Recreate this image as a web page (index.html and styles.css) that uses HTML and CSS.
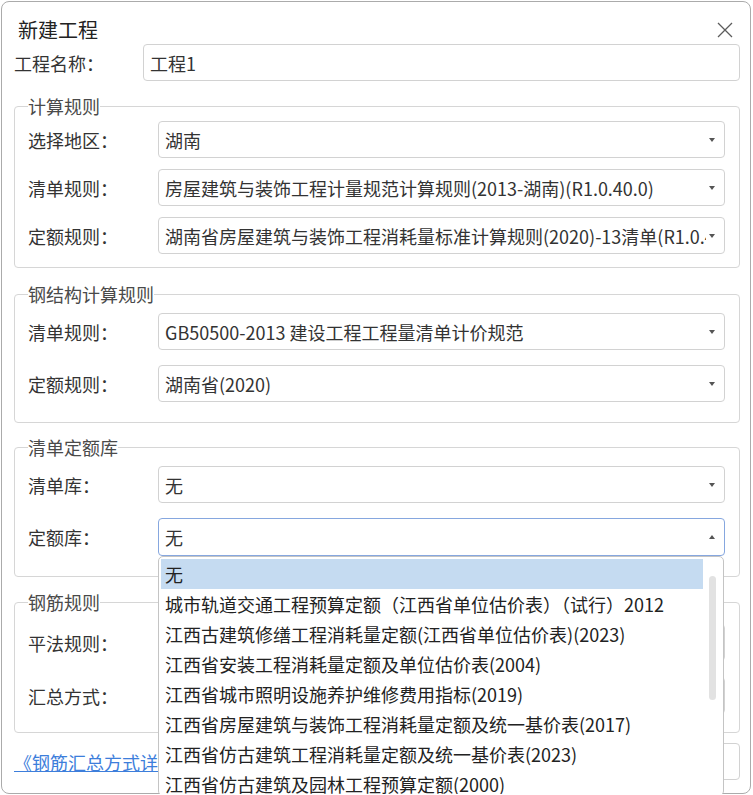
FILE: index.html
```html
<!DOCTYPE html>
<html lang="zh-CN">

<head>
    <meta charset="UTF-8">
    <title>新建工程</title>
    <link rel="stylesheet" href="styles.css">
</head>

<body>
    <div class="dialog">
        <div class="title-bar">
            <span class="title">新建工程</span>
            <span class="close">
                <svg width="16" height="16" viewBox="0 0 16 16"><path d="M1 1L15 15M15 1L1 15" stroke="#5c5c5c" stroke-width="1.3" fill="none"/></svg>
            </span>
        </div>

        <div class="row name-row">
            <label>工程名称：</label>
            <div class="field">工程1</div>
        </div>

        <!-- 计算规则 -->
        <fieldset class="group g-calc">
            <legend>计算规则</legend>
            <div class="rows">
                <div class="row">
                    <label>选择地区：</label>
                    <div class="select"><span class="value">湖南</span><i class="arrow"></i></div>
                </div>
                <div class="row">
                    <label>清单规则：</label>
                    <div class="select"><span class="value">房屋建筑与装饰工程计量规范计算规则(2013-湖南)(R1.0.40.0)</span><i class="arrow"></i></div>
                </div>
                <div class="row">
                    <label>定额规则：</label>
                    <div class="select"><span class="value">湖南省房屋建筑与装饰工程消耗量标准计算规则(2020)-13清单(R1.0.40.0)</span><i class="arrow"></i></div>
                </div>
            </div>
        </fieldset>

        <!-- 钢结构计算规则 -->
        <fieldset class="group g-steel">
            <legend>钢结构计算规则</legend>
            <div class="rows">
                <div class="row">
                    <label>清单规则：</label>
                    <div class="select"><span class="value">GB50500-2013 建设工程工程量清单计价规范</span><i class="arrow"></i></div>
                </div>
                <div class="row">
                    <label>定额规则：</label>
                    <div class="select"><span class="value">湖南省(2020)</span><i class="arrow"></i></div>
                </div>
            </div>
        </fieldset>

        <!-- 清单定额库 -->
        <fieldset class="group g-lib">
            <legend>清单定额库</legend>
            <div class="rows">
                <div class="row">
                    <label>清单库：</label>
                    <div class="select"><span class="value">无</span><i class="arrow"></i></div>
                </div>
                <div class="row">
                    <label>定额库：</label>
                    <div class="select open">
                        <span class="value">无</span><i class="arrow up"></i>
                        <div class="popup">
                            <ul class="options">
                                <li class="selected">无</li>
                                <li>城市轨道交通工程预算定额（江西省单位估价表）（试行）2012</li>
                                <li>江西古建筑修缮工程消耗量定额(江西省单位估价表)(2023)</li>
                                <li>江西省安装工程消耗量定额及单位估价表(2004)</li>
                                <li>江西省城市照明设施养护维修费用指标(2019)</li>
                                <li>江西省房屋建筑与装饰工程消耗量定额及统一基价表(2017)</li>
                                <li>江西省仿古建筑工程消耗量定额及统一基价表(2023)</li>
                                <li>江西省仿古建筑及园林工程预算定额(2000)</li>
                            </ul>
                            <div class="scroll-thumb"></div>
                        </div>
                    </div>
                </div>
            </div>
        </fieldset>

        <!-- 钢筋规则 (inputs sit under the open list) -->
        <fieldset class="group g-rebar">
            <legend>钢筋规则</legend>
            <div class="rows">
                <div class="row">
                    <label>平法规则：</label>
                    <div class="select"><span class="value"></span><i class="arrow"></i></div>
                </div>
                <div class="row">
                    <label>汇总方式：</label>
                    <div class="select"><span class="value"></span><i class="arrow"></i></div>
                </div>
            </div>
        </fieldset>

        <div class="footer">
            <a href="#">《钢筋汇总方式详</a>
            <button type="button"></button>
        </div>
    </div>
</body>

</html>
```

FILE: styles.css
```css
html,
body {
    margin: 0;
    padding: 0;
    overflow: hidden;
    background: #fff;
}

body {
    font-family: "Noto Sans CJK SC", "Noto Sans", sans-serif;
    font-size: 18px;
    color: #333;
}

.dialog {
    position: relative;
    box-sizing: border-box;
    width: 750px;
    height: 793px;
    margin: 1px 0 0 1px;
    padding: 0 10px 0 12px;
    border: 1px solid #ababab;
    border-radius: 8px;
}

.title-bar {
    display: flex;
    justify-content: space-between;
    align-items: center;
    height: 24px;
    margin: 16px 0 2px;
}

.title {
    margin-left: 4px;
    font-size: 20px;
    line-height: 24px;
    color: #222;
}

.close {
    display: flex;
    margin-right: 7px;
}

.row {
    display: flex;
    align-items: center;
    min-width: 0;
}

.row label {
    flex: none;
    width: 130px;
}

.name-row label {
    width: 129px;
}

.field,
.select {
    flex: 1;
    min-width: 0;
    box-sizing: border-box;
    height: 37px;
    display: flex;
    align-items: center;
    padding: 0 9px 0 6px;
    border: 1px solid #d2d2d2;
    border-radius: 4px;
    background: #fff;
}

.select .value {
    flex: 1;
    min-width: 0;
    overflow: hidden;
    white-space: nowrap;
    margin-right: 3px;
}

.arrow {
    flex: none;
    width: 0;
    height: 0;
    border-left: 3px solid transparent;
    border-right: 3px solid transparent;
    border-top: 4px solid #555;
}

.arrow.up {
    border-top: none;
    border-bottom: 4px solid #555;
}

/* group boxes */
.group {
    min-width: 0;
    margin: 15px 0 0;
    padding: 5px 14px 13px 13px;
    border: 1px solid #d6d6d6;
    border-radius: 4px;
}

.group legend {
    padding: 0;
    line-height: 20px;
    color: #4a4a4a;
}

.rows {
    display: grid;
    grid-template-columns: minmax(0, 1fr);
    row-gap: 11px;
}

.g-steel,
.g-lib {
    margin-top: 16px;
    padding-top: 9px;
    padding-bottom: 20px;
}

.g-lib {
    margin-top: 14px;
}

.g-steel .rows,
.g-lib .rows {
    row-gap: 15px;
}

.g-lib .open {
    height: 38px;
}

.g-rebar {
    padding-top: 12px;
    padding-bottom: 18px;
}

.g-rebar .rows {
    row-gap: 16px;
}

/* open combo */
.select.open {
    position: relative;
    border-color: #86a7df;
}

.popup {
    position: absolute;
    top: 100%;
    left: -1px;
    right: 0;
    height: 240px;
    margin-top: 1px;
    box-sizing: border-box;
    padding: 2px 20px 0 2px;
    background: #fff;
    border: 1px solid #c4c4c4;
    border-radius: 5px;
    z-index: 10;
}

.options {
    list-style: none;
    margin: 0;
    padding: 0;
}

.options li {
    height: 30px;
    line-height: 30px;
    padding-left: 4px;
    white-space: nowrap;
    color: #222;
}

.options li.selected {
    background: #c5dbf1;
}

.scroll-thumb {
    position: absolute;
    top: 19px;
    right: 7px;
    width: 7px;
    height: 124px;
    border-radius: 4px;
    background: #e2e2e2;
}

/* bottom */
.footer {
    display: flex;
    justify-content: space-between;
    align-items: center;
    margin-top: 10px;
}

.footer a {
    color: #3d7edb;
    text-decoration: underline;
}

.footer button {
    height: 37px;
    width: 120px;
    font: inherit;
    background: #fff;
    border: 1px solid #d2d2d2;
    border-radius: 4px;
}
```
